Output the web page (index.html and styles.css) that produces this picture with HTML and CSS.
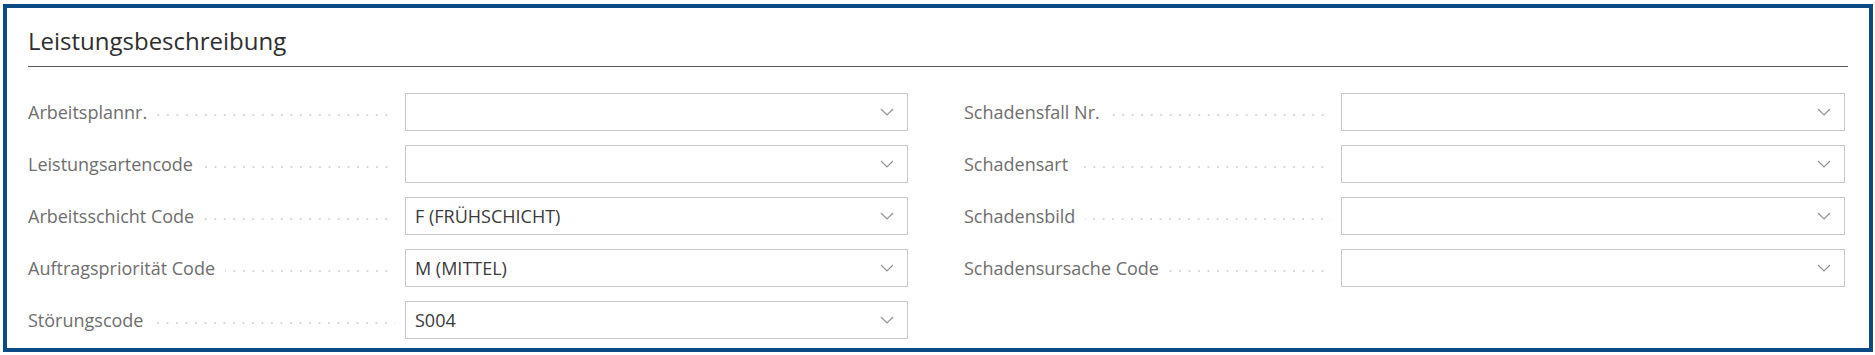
FILE: index.html
```html
<!DOCTYPE html>
<html lang="de">
<head>
  <meta charset="UTF-8">
  <meta name="viewport" content="width=device-width, initial-scale=1.0">
  <title>Leistungsbeschreibung</title>
  <link rel="stylesheet" href="styles.css">
</head>
<body>
  <div class="panel">
    <h2 class="panel-title">Leistungsbeschreibung</h2>

    <div class="fields">
      <!-- left column -->
      <div class="column">
        <div class="field">
          <label class="field-label"><span>Arbeitsplannr.</span></label>
          <div class="select">
            <span class="select-value"></span>
            <svg class="chevron" width="14" height="8" viewBox="0 0 14 8"><path d="M1 1 L7 7 L13 1" /></svg>
          </div>
        </div>
        <div class="field">
          <label class="field-label"><span>Leistungsartencode</span></label>
          <div class="select">
            <span class="select-value"></span>
            <svg class="chevron" width="14" height="8" viewBox="0 0 14 8"><path d="M1 1 L7 7 L13 1" /></svg>
          </div>
        </div>
        <div class="field">
          <label class="field-label"><span>Arbeitsschicht Code</span></label>
          <div class="select">
            <span class="select-value">F (FRÜHSCHICHT)</span>
            <svg class="chevron" width="14" height="8" viewBox="0 0 14 8"><path d="M1 1 L7 7 L13 1" /></svg>
          </div>
        </div>
        <div class="field">
          <label class="field-label"><span>Auftragspriorität Code</span></label>
          <div class="select">
            <span class="select-value">M (MITTEL)</span>
            <svg class="chevron" width="14" height="8" viewBox="0 0 14 8"><path d="M1 1 L7 7 L13 1" /></svg>
          </div>
        </div>
        <div class="field">
          <label class="field-label"><span>Störungscode</span></label>
          <div class="select">
            <span class="select-value">S004</span>
            <svg class="chevron" width="14" height="8" viewBox="0 0 14 8"><path d="M1 1 L7 7 L13 1" /></svg>
          </div>
        </div>
      </div>

      <!-- right column -->
      <div class="column">
        <div class="field">
          <label class="field-label"><span>Schadensfall Nr.</span></label>
          <div class="select">
            <span class="select-value"></span>
            <svg class="chevron" width="14" height="8" viewBox="0 0 14 8"><path d="M1 1 L7 7 L13 1" /></svg>
          </div>
        </div>
        <div class="field">
          <label class="field-label"><span>Schadensart</span></label>
          <div class="select">
            <span class="select-value"></span>
            <svg class="chevron" width="14" height="8" viewBox="0 0 14 8"><path d="M1 1 L7 7 L13 1" /></svg>
          </div>
        </div>
        <div class="field">
          <label class="field-label"><span>Schadensbild</span></label>
          <div class="select">
            <span class="select-value"></span>
            <svg class="chevron" width="14" height="8" viewBox="0 0 14 8"><path d="M1 1 L7 7 L13 1" /></svg>
          </div>
        </div>
        <div class="field">
          <label class="field-label"><span>Schadensursache Code</span></label>
          <div class="select">
            <span class="select-value"></span>
            <svg class="chevron" width="14" height="8" viewBox="0 0 14 8"><path d="M1 1 L7 7 L13 1" /></svg>
          </div>
        </div>
      </div>
    </div>
  </div>
</body>
</html>
```

FILE: styles.css
```css
body {
  font-family: "Open Sans", Arial, sans-serif;
  margin: 0;
  padding: 4px 2px 3px 3px;
  background-color: #fff;
}
.panel {
  border: 4px solid #0c4a85;
  padding: 0 21px 9px 21px;
  background: white;
}
.panel-title {
  margin: 0;
  padding: 17px 0 9px 0;
  font-size: 24px;
  line-height: 32px;
  font-weight: normal;
  color: #2e2e2e;
  border-bottom: 1px solid #5a5a5a;
}
.fields {
  display: grid;
  grid-template-columns: 880px 881px;
  column-gap: 56px;
  margin-top: 26px;
}
.column {
  display: flex;
  flex-direction: column;
  gap: 14px;
}
.field {
  display: flex;
  align-items: center;
  height: 38px;
}
.field-label {
  display: flex;
  align-items: center;
  width: 367px;
  margin-right: 10px;
  font-size: 18px;
  color: #6e6e6e;
  white-space: nowrap;
}
.field-label::after {
  content: "";
  flex: 1;
  height: 2px;
  margin: 6px 0 0 10px;
  background-image: linear-gradient(to right, #d8d8d8 2px, transparent 2px);
  background-size: 9.5px 2px;
  background-repeat: repeat-x;
  background-position: right center;
}
.select {
  flex: 1;
  display: flex;
  align-items: center;
  height: 38px;
  box-sizing: border-box;
  border: 1px solid #c9c9c9;
  padding: 0 13px 0 9px;
  background: white;
}
.select-value {
  flex: 1;
  font-size: 18px;
  color: #3a3a3a;
  white-space: nowrap;
}
.chevron path {
  fill: none;
  stroke: #949494;
  stroke-width: 1.2;
}
```
